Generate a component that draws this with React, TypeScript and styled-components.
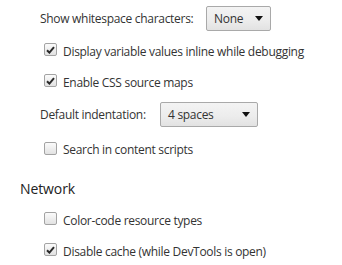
import React from "react";
import styled, { createGlobalStyle } from "styled-components";

const Global = createGlobalStyle`
  html, body { margin: 0; padding: 0; background: #fff; }
  body { font-family: "Open Sans", "Noto Sans", sans-serif; }
`;

const Page = styled.div`
  width: 342px;
  height: 265px;
  overflow: hidden;
  padding: 2px 0 0 20px;
  box-sizing: border-box;
  color: #333;
  font-size: 12px;
  letter-spacing: -0.3px;
`;

const Row = styled.div<{ $h: number; $indent?: number }>`
  display: flex;
  align-items: center;
  height: ${(p) => p.$h}px;
  padding-left: ${(p) => p.$indent ?? 20}px;
`;

const Label = styled.span<{ $w: number }>`
  width: ${(p) => p.$w}px;
  flex: none;
`;

const CheckText = styled.span`
  padding-top: 3px;
`;

const Select = styled.div<{ $w: number }>`
  box-sizing: border-box;
  width: ${(p) => p.$w}px;
  height: 25px;
  display: flex;
  align-items: center;
  justify-content: space-between;
  padding: 0 7px 0 7px;
  border: 1px solid #a9a9a9;
  border-radius: 2px;
  background: linear-gradient(#f3f3f3, #ececec 60%, #e2e2e2);
  color: #333;
`;

const Arrow = styled.span`
  width: 0;
  height: 0;
  border-left: 4.5px solid transparent;
  border-right: 4.5px solid transparent;
  border-top: 5px solid #111;
`;

const Box = styled.span`
  box-sizing: border-box;
  width: 13px;
  height: 13px;
  margin: 0 6px 0 3px;
  border: 1px solid #a3a3a3;
  border-radius: 2px;
  background: linear-gradient(#fbfbfb, #e2e2e2);
  display: flex;
  align-items: center;
  justify-content: center;
  flex: none;
`;

const Header = styled.div`
  font-size: 14px;
  letter-spacing: -0.1px;
  color: #222;
  height: 29px;
  margin-top: 10px;
  display: flex;
  align-items: center;
`;

const Check = ({ on }: { on: boolean }) => (
  <Box>
    {on && (
      <svg width="9" height="8" viewBox="0 0 9 8">
        <path d="M1 4.2 L3.4 6.6 L8 1.2" stroke="#2a2a2a" strokeWidth="2" fill="none" />
      </svg>
    )}
  </Box>
);

const CheckRow = ({ on, text, h = 31 }: { on: boolean; text: string; h?: number }) => (
  <Row $h={h} $indent={21}>
    <Check on={on} />
    <CheckText>{text}</CheckText>
  </Row>
);

export default function App() {
  return (
    <Page>
      <Global />
      <Row $h={32}>
        <Label $w={166}>Show whitespace characters:</Label>
        <Select $w={65}>
          <span>None</span>
          <Arrow />
        </Select>
      </Row>
      <CheckRow on text="Display variable values inline while debugging" />
      <CheckRow on text="Enable CSS source maps" />
      <Row $h={36}>
        <Label $w={120}>Default indentation:</Label>
        <Select $w={98}>
          <span>4 spaces</span>
          <Arrow />
        </Select>
      </Row>
      <CheckRow on={false} text="Search in content scripts" h={32} />
      <Header>Network</Header>
      <CheckRow on={false} text="Color-code resource types" />
      <CheckRow on text="Disable cache (while DevTools is open)" />
    </Page>
  );
}
